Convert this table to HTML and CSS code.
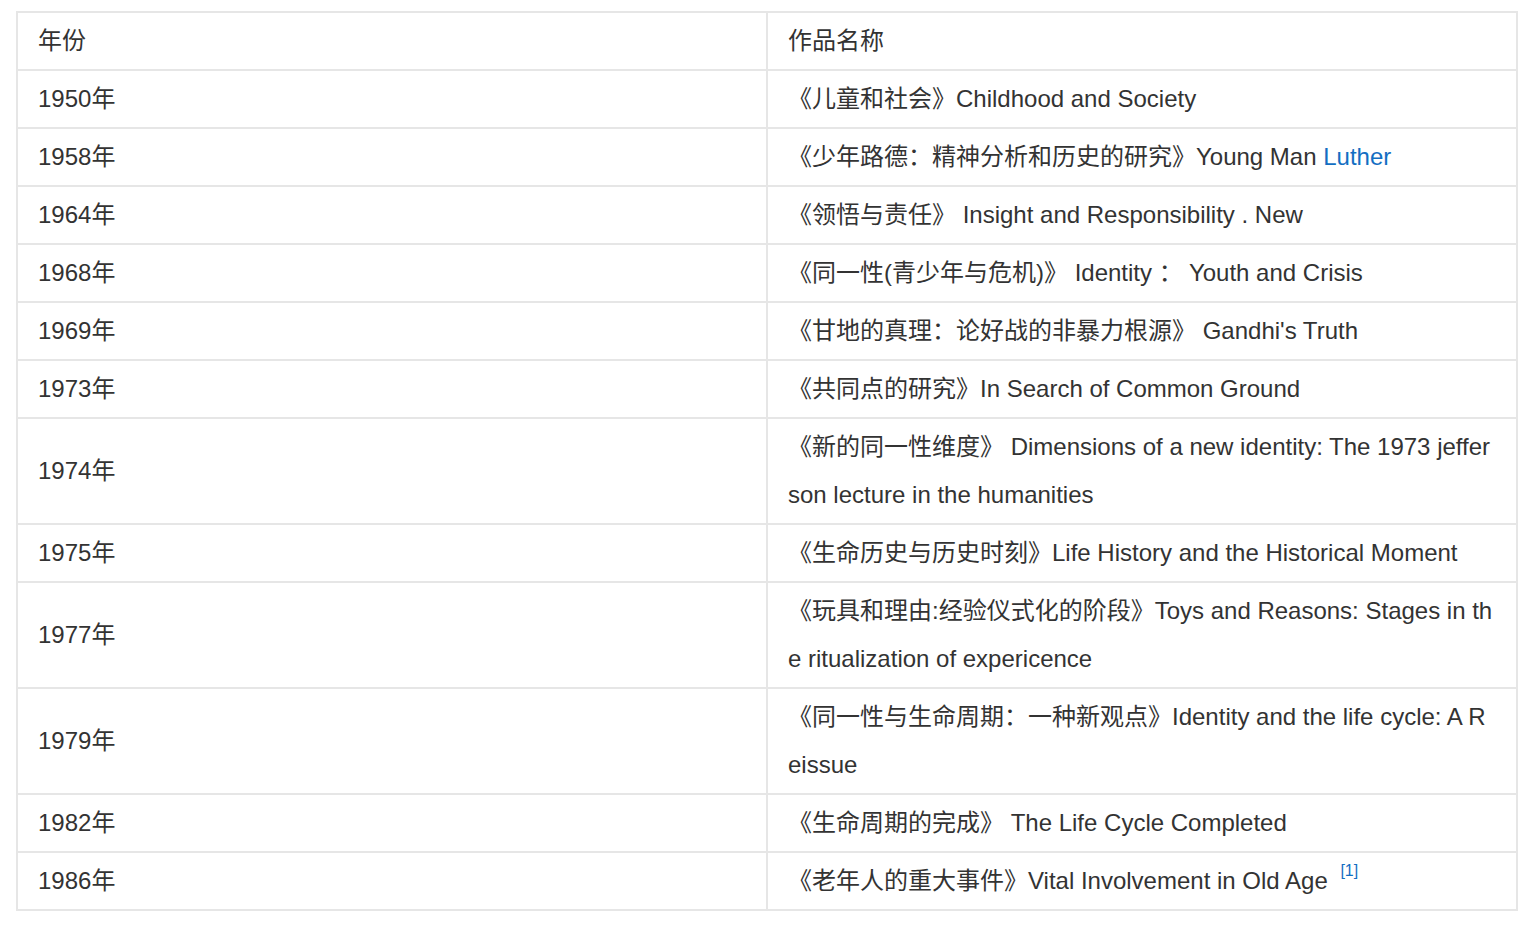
FILE: index.html
```html
<!DOCTYPE html>
<html lang="zh">
<head>
<meta charset="utf-8">
<title>作品</title>
<link rel="stylesheet" href="styles.css">
</head>
<body>
<div class="page">
<table class="works">
<thead>
<tr><th>年份</th><th>作品名称</th></tr>
</thead>
<tbody>
<tr><td>1950年</td><td>《儿童和社会》Childhood and Society</td></tr>
<tr><td>1958年</td><td>《少年路德：精神分析和历史的研究》Young Man <a class="link" href="#">Luther</a></td></tr>
<tr><td>1964年</td><td>《领悟与责任》 Insight and Responsibility . New</td></tr>
<tr><td>1968年</td><td>《同一性(青少年与危机)》 Identity ： Youth and Crisis</td></tr>
<tr><td>1969年</td><td>《甘地的真理：论好战的非暴力根源》 Gandhi's Truth</td></tr>
<tr><td>1973年</td><td>《共同点的研究》In Search of Common Ground</td></tr>
<tr><td>1974年</td><td>《新的同一性维度》 Dimensions of a new identity: The 1973 jefferson lecture in the humanities</td></tr>
<tr><td>1975年</td><td>《生命历史与历史时刻》Life History and the Historical Moment</td></tr>
<tr><td>1977年</td><td>《玩具和理由:经验仪式化的阶段》Toys and Reasons: Stages in the ritualization of expericence</td></tr>
<tr><td>1979年</td><td>《同一性与生命周期：一种新观点》Identity and the life cycle: A Reissue</td></tr>
<tr><td>1982年</td><td>《生命周期的完成》 The Life Cycle Completed</td></tr>
<tr><td>1986年</td><td>《老年人的重大事件》Vital Involvement in Old Age <sup class="ref">[1]</sup></td></tr>
</tbody>
</table>
</div>
</body>
</html>
```

FILE: styles.css
```css
html, body {
  margin: 0;
  padding: 0;
  background: #ffffff;
}

.page {
  padding: 11px 14px 0 16px;
  font-family: "Liberation Sans", "Noto Sans CJK SC", sans-serif;
  color: #333333;
}

.works {
  width: 1502px;
  border-collapse: collapse;
  table-layout: fixed;
  font-size: 24px;
  line-height: 48px;
}

.works th,
.works td {
  width: 50%;
  border: 2px solid #e6e6e6;
  padding: 4px 20px;
  text-align: left;
  font-weight: normal;
  vertical-align: middle;
  word-break: break-all;
}

.link {
  color: #136ec2;
  text-decoration: none;
}

.ref {
  color: #136ec2;
  font-size: 16px;
  line-height: 1;
  vertical-align: top;
  position: relative;
  top: 6px;
  margin-left: 6px;
}
```
